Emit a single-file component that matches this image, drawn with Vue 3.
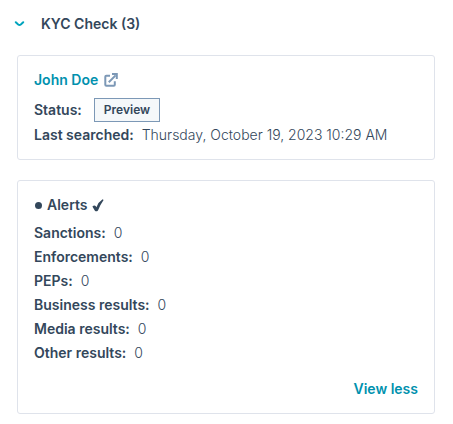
<script setup>
import { ref } from 'vue'

const open = ref(true)

const results = [
  { label: 'Sanctions:', count: 0 },
  { label: 'Enforcements:', count: 0 },
  { label: 'PEPs:', count: 0 },
  { label: 'Business results:', count: 0 },
  { label: 'Media results:', count: 0 },
  { label: 'Other results:', count: 0 },
]
</script>

<template>
  <section class="panel">
    <h2 class="heading">
      <button class="toggle" type="button" :aria-expanded="open" @click="open = !open">
        <svg class="chevron" viewBox="0 0 11 6" aria-hidden="true">
          <path d="M1.8 1.3 L4.2 3.5 Q5.5 4.5 6.8 3.5 L9.2 1.3" />
        </svg>
        <span>KYC Check (3)</span>
      </button>
    </h2>

    <div v-if="open" class="cards">
      <article class="card">
        <a class="person" href="#">
          <span>John Doe</span>
          <svg class="external" viewBox="0 0 14 14" aria-hidden="true">
            <path d="M6 2.8H2.3Q1.3 2.8 1.3 3.8V11.7Q1.3 12.7 2.3 12.7H9.8Q10.8 12.7 10.8 11.7V8.2" />
            <path d="M4.8 9.2 L11.6 2.4" />
            <path d="M8 1.1H12.8V6" />
          </svg>
        </a>
        <dl class="facts">
          <div class="row status">
            <dt>Status:</dt>
            <dd class="tag">Preview</dd>
          </div>
          <div class="row">
            <dt>Last searched:</dt>
            <dd>Thursday, October 19, 2023 10:29 AM</dd>
          </div>
        </dl>
      </article>

      <article class="card">
        <h3 class="title">
          <span class="dot"></span>
          <span>Alerts</span>
          <svg class="check" viewBox="0 0 12 13" aria-hidden="true">
            <path d="M0.4 7.6 Q2.2 5.6 3.6 7 L4.4 8.2 Q6.4 3 10.6 0.3 L11.6 0.9 Q8.2 5.6 6 11.4 Q4.3 13 2.9 11.7 Z" />
          </svg>
        </h3>
        <dl class="results">
          <div v-for="item in results" :key="item.label" class="row">
            <dt>{{ item.label }}</dt>
            <dd>{{ item.count }}</dd>
          </div>
        </dl>
        <div class="footer">
          <button class="less" type="button">View less</button>
        </div>
      </article>
    </div>
  </section>
</template>

<style>
body {
  margin: 0;
  background: #ffffff;
}
</style>

<style scoped>
.panel {
  padding: 12px 18px 10px 17px;
  color: #33475b;
  font-family: Inter, "Open Sans", sans-serif;
  font-size: 14px;
  line-height: 24px;
}

.heading,
.title,
.facts,
.results,
.row dd {
  margin: 0;
}

.toggle,
.less {
  padding: 0;
  border: 0;
  background: none;
  color: inherit;
  font: inherit;
  font-weight: 600;
  cursor: pointer;
}

.heading {
  font-size: 14px;
}

.toggle {
  display: flex;
  align-items: center;
  gap: 16px;
  margin-left: -3px;
}

.chevron {
  width: 11px;
  height: 6px;
  fill: none;
  stroke: #00a4bd;
  stroke-width: 2;
  stroke-linecap: round;
}

.cards {
  display: grid;
  gap: 20px;
  margin-top: 19px;
}

.card {
  padding: 12px 16px;
  border: 1px solid #dfe3eb;
  border-radius: 3px;
}

.person {
  display: flex;
  align-items: center;
  gap: 6px;
  color: #0091ae;
  font-weight: 600;
  text-decoration: none;
}

.external {
  width: 14px;
  height: 14px;
  fill: none;
  stroke: #7c98b6;
  stroke-width: 2;
}

.facts {
  display: grid;
  gap: 1px;
  padding-top: 6px;
}

.row {
  display: flex;
  align-items: center;
  gap: 8px;
}

.row dt {
  font-weight: 600;
}

.row dd {
  font-weight: 300;
}

.status {
  gap: 12px;
}

.status .tag {
  padding: 0 9px;
  border: 1px solid #7c98b6;
  background: #f5f8fa;
  font-size: 12px;
  font-weight: 600;
  line-height: 22px;
}

.title {
  display: flex;
  align-items: center;
  gap: 5px;
  font-size: 14px;
  font-weight: 600;
}

.dot {
  width: 7px;
  height: 7px;
  margin-left: 1px;
  border-radius: 50%;
  background: #33475b;
}

.check {
  width: 12px;
  height: 13px;
  fill: #33475b;
}

.results {
  padding-top: 4px;
}

.footer {
  display: flex;
  justify-content: flex-end;
  padding-top: 12px;
}

.less {
  color: #0091ae;
}
</style>
